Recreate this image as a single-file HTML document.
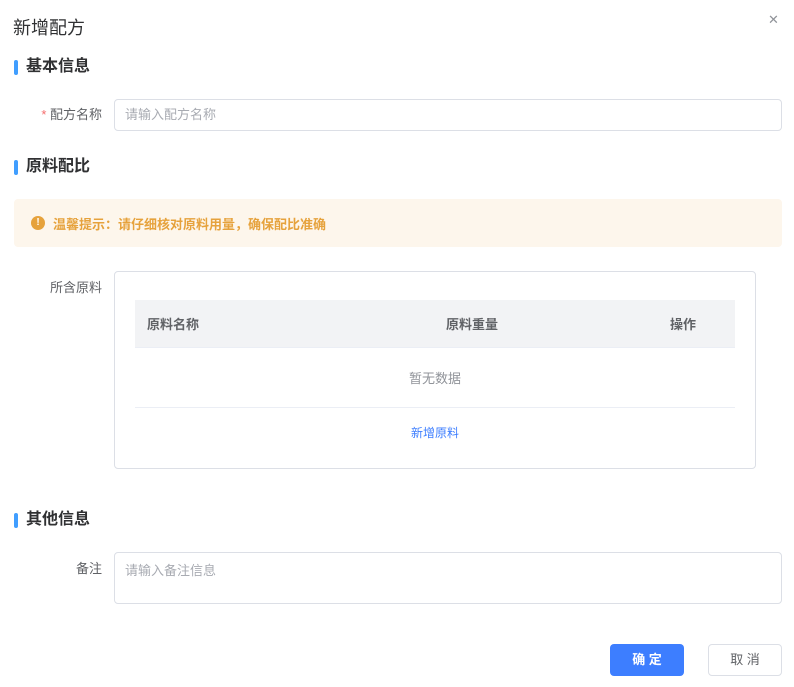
<!DOCTYPE html>
<html><head><meta charset="utf-8"><style>
*{box-sizing:border-box;margin:0;padding:0}
body{width:794px;height:687px;background:#fff;font-family:"Liberation Sans","Noto Sans CJK SC",sans-serif;position:relative;overflow:hidden;color:#606266}
.a{position:absolute}
.title{left:13px;top:14px;font-size:18px;color:#303133}
.close{left:768px;top:12px;font-size:13px;color:#909399}
.sec{font-size:16px;font-weight:bold;color:#303133;padding-left:12px;line-height:20px}
.sec:before{content:"";position:absolute;left:0;top:3px;width:4px;height:15px;background:#409eff;border-radius:2px}
.lbl{font-size:13px;color:#606266;text-align:right;width:90px}
.inp{border:1px solid #dcdfe6;border-radius:4px;font-size:13px;color:#a8abb2;padding-left:10px}
</style></head><body>
<div class="a title">新增配方</div>
<div class="a close">✕</div>
<div class="a sec" style="left:14px;top:57px">基本信息</div>
<div class="a lbl" style="left:12px;top:104px"><span style="color:#f56c6c">* </span>配方名称</div>
<div class="a inp" style="left:114px;top:99px;width:668px;height:32px;line-height:30px">请输入配方名称</div>
<div class="a sec" style="left:14px;top:157px">原料配比</div>
<div class="a" style="left:14px;top:199px;width:768px;height:48px;background:#fdf6ec;border-radius:4px"></div>
<div class="a" style="left:31px;top:216px;width:14px;height:14px;border-radius:50%;background:#e6a23c;color:#fff;font-size:10px;font-weight:bold;text-align:center;line-height:14px">!</div>
<div class="a" style="left:53px;top:214px;font-size:13px;color:#e6a23c;font-weight:bold">温馨提示：请仔细核对原料用量，确保配比准确</div>
<div class="a lbl" style="left:12px;top:277px">所含原料</div>
<div class="a" style="left:114px;top:271px;width:642px;height:198px;border:1px solid #dcdfe6;border-radius:4px"></div>
<div class="a" style="left:135px;top:300px;width:600px;height:48px;background:#f2f3f5;border-bottom:1px solid #ebeef5;font-size:13px;font-weight:bold;color:#606266">
<span class="a" style="left:12px;top:14px">原料名称</span>
<span class="a" style="left:311px;top:14px">原料重量</span>
<span class="a" style="left:535px;top:14px">操作</span></div>
<div class="a" style="left:135px;top:368px;width:600px;text-align:center;font-size:13px;color:#909399">暂无数据</div>
<div class="a" style="left:135px;top:407px;width:600px;height:1px;background:#ebeef5"></div>
<div class="a" style="left:135px;top:424px;width:600px;text-align:center;font-size:12px;color:#3d7eff">新增原料</div>
<div class="a sec" style="left:14px;top:510px">其他信息</div>
<div class="a lbl" style="left:12px;top:558px">备注</div>
<div class="a inp" style="left:114px;top:552px;width:668px;height:52px;padding-top:7px">请输入备注信息</div>
<div class="a" style="left:610px;top:644px;width:74px;height:32px;background:#3d7eff;border-radius:4px;color:#fff;font-size:13px;text-align:center;line-height:32px;font-weight:bold">确 定</div>
<div class="a" style="left:708px;top:644px;width:74px;height:32px;border:1px solid #dcdfe6;border-radius:4px;color:#606266;font-size:13px;text-align:center;line-height:30px">取 消</div>
</body></html>
